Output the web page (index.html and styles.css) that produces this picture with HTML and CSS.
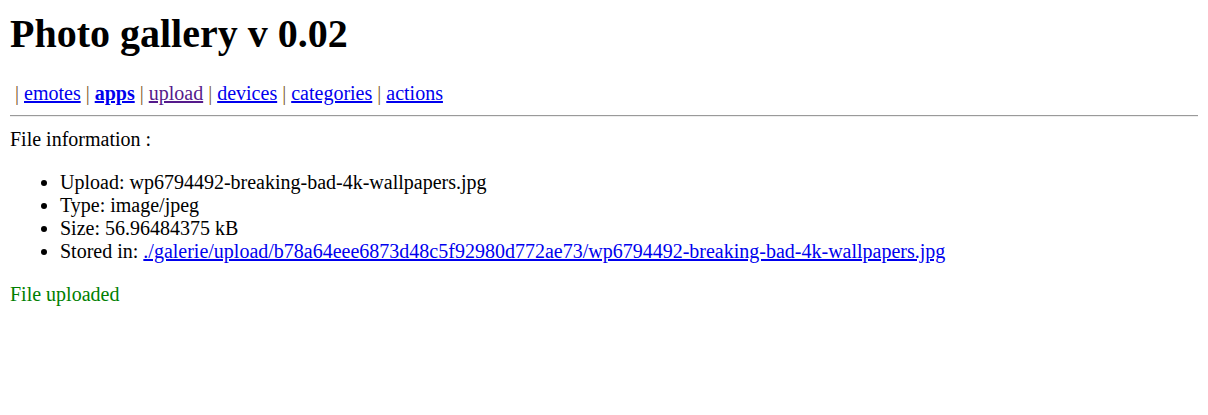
FILE: index.html
```html
<!DOCTYPE html>
<html>
<head>
<meta charset="utf-8">
<title>Photo gallery</title>
<link rel="stylesheet" href="styles.css">
</head>
<body>
<h1 class="title">Photo gallery v 0.02</h1>
<div class="nav"> <span class="sep">|</span> <a href="#">emotes</a> <span class="sep">|</span> <a href="#" class="bold">apps</a> <span class="sep">|</span> <a href="#" class="visited">upload</a> <span class="sep">|</span> <a href="#">devices</a> <span class="sep">|</span> <a href="#">categories</a> <span class="sep">|</span> <a href="#">actions</a></div>
<div class="rule"></div>
<div class="info">File information :</div>
<ul class="list">
<li>Upload: wp6794492-breaking-bad-4k-wallpapers.jpg</li>
<li>Type: image/jpeg</li>
<li>Size: 56.96484375 kB</li>
<li>Stored in: <a href="#">./galerie/upload/b78a64eee6873d48c5f92980d772ae73/wp6794492-breaking-bad-4k-wallpapers.jpg</a></li>
</ul>
<div class="ok">File uploaded</div>
</body>
</html>
```
FILE: styles.css
```css
body {
  margin: 10px;
  font-family: "Liberation Serif", "Times New Roman", serif;
  font-size: 20px;
  color: #000;
  background: #fff;
}
.title {
  font-size: 40px;
  font-weight: bold;
  margin: 0 0 25px 0;
}
.nav {
  margin: 0;
  padding-left: 5px;
}
.nav a { color: #0000ee; }
.nav a.visited { color: #551a8b; }
.nav a.bold { font-weight: bold; }
.sep { color: #7a5a2a; }
.rule {
  margin: 10px 0 11px 0;
  width: calc(100% + 10px);
  border-top: 1px solid #9a9a9a;
  border-bottom: 1px solid #eeeeee;
  height: 0;
}
.info { margin: 0; }
.list {
  margin: 20px 0;
  padding-left: 50px;
}
.list a { color: #0000ee; }
.ok { color: #008000; }
```
